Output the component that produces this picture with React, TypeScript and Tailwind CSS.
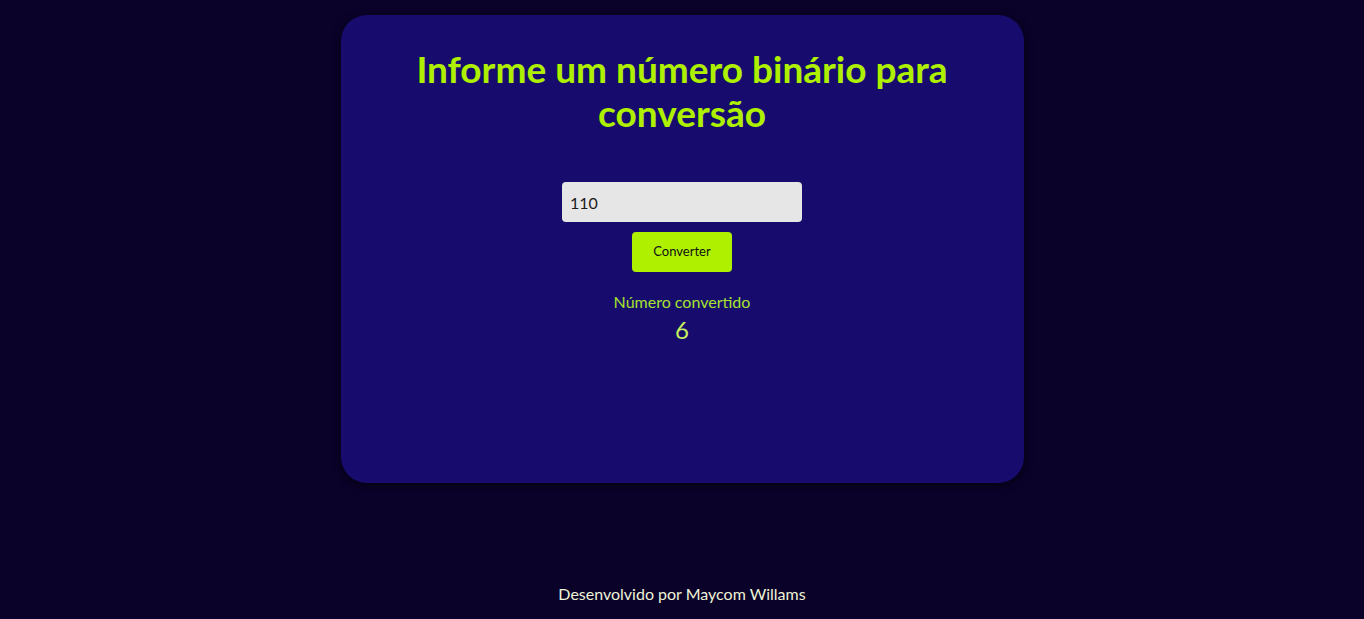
import React, { useState } from "react";

export default function App() {
  const [value, setValue] = useState("110");
  const [result, setResult] = useState("6");

  const convert = () => {
    if (/^[01]+$/.test(value)) setResult(String(parseInt(value, 2)));
  };

  return (
    <div className="min-h-screen bg-[#0a0229] flex flex-col items-center font-['Lato','Noto_Sans',sans-serif]">
      <main className="mt-[15px] w-[683px] h-[468px] bg-[#170c6e] rounded-[26px] shadow-[0_2px_8px_rgba(0,0,0,0.6)] flex flex-col items-center">
        <h1 className="mt-[32px] text-[37px] leading-[44px] font-bold text-[#aef000] text-center max-w-[580px]">
          Informe um número binário para conversão
        </h1>
        <input
          value={value}
          onChange={(e) => setValue(e.target.value)}
          className="mt-[47px] w-[240px] h-[40px] bg-[#e6e6e6] rounded-[4px] px-2 text-[16px] text-[#1a1a1a] outline-none"
        />
        <button
          onClick={convert}
          className="mt-[10px] w-[100px] h-[40px] bg-[#aef000] rounded-[4px] text-[13px] text-[#111]"
        >
          Converter
        </button>
        <p className="mt-[20px] text-[16px] leading-[20px] text-[#a6e22e]">Número convertido</p>
        <p className="mt-[2px] text-[24px] leading-[32px] text-[#c6f060]">{result}</p>
      </main>
      <footer className="mt-auto pb-[13px] text-[16px] text-[#eef3d8]">
        Desenvolvido por Maycom Willams
      </footer>
    </div>
  );
}
